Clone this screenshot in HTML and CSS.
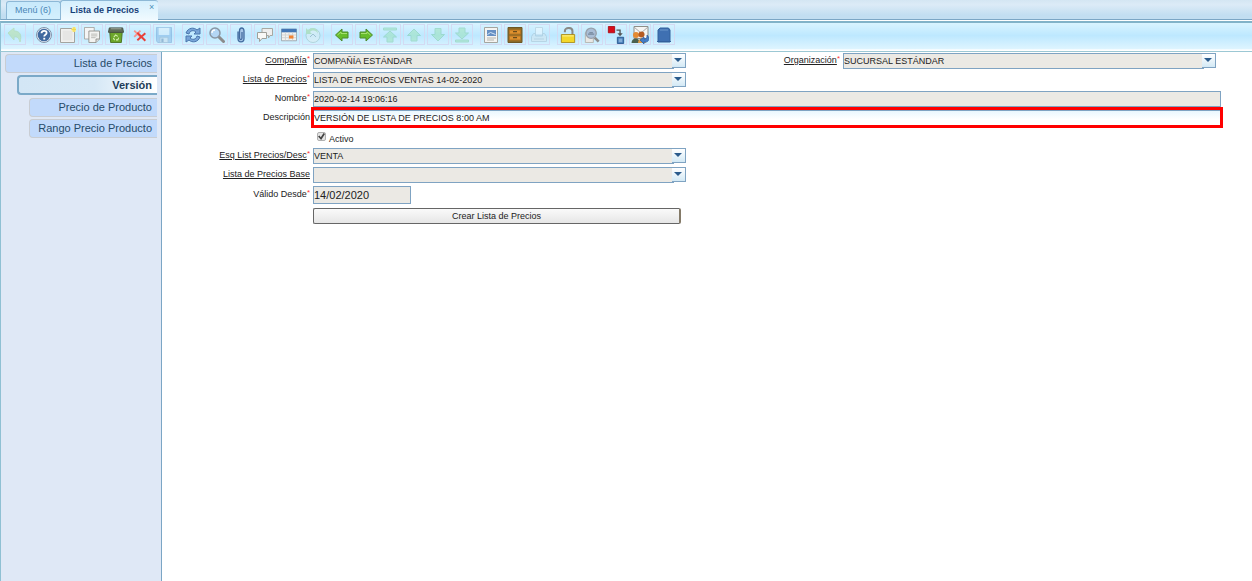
FILE: index.html
```html
<!DOCTYPE html>
<html lang="es">
<head>
    <meta charset="UTF-8">
    <meta name="viewport" content="width=device-width, initial-scale=1.0">
    <title>Lista de Precios</title>
    <link rel="stylesheet" href="styles.css">
</head>
<body>

<nav class="tabs">
    <a class="tab" href="#menu">Menú (6)</a>
    <div class="tab active">
        <a href="#lista">Lista de Precios</a>
        <button class="tab-close" aria-label="Cerrar">×</button>
    </div>
</nav>

<div class="toolbar">
    <div class="tool-group">
        <button disabled aria-label="Deshacer">
            <svg viewBox="0 0 16 16"><path d="M1 6l6-5v3c6 0 8 4 6 11-1-4-3-6-6-5v3z" fill="#b4dc80" stroke="#9fce72"/></svg>
        </button>
    </div>
    <div class="tool-group">
        <button aria-label="Ayuda">
            <svg viewBox="0 0 16 16"><circle cx="8" cy="8" r="7.5" fill="#e8eef6" stroke="#8294ab"/><circle cx="8" cy="8" r="6.300" fill="#41699f"/><path d="M5.500 6.300C5.500 3 10.800 3 10.600 6c0 1.800-2.400 1.800-2.400 3.500" fill="none" stroke="#fff" stroke-width="1.800"/><path d="M7.300 10.800h1.900v1.800H7.300z" fill="#fff"/></svg>
        </button>
        <button aria-label="Nuevo">
            <svg viewBox="0 0 16 16"><path d="M.5 1.500h14v14H.5z" fill="#f1f1ef" stroke="#a4a4a0"/><path d="M2.500 3.500h10v10h-10z" fill="#e6e6e4"/><circle cx="14" cy="2.500" r="2.500" fill="#f8ea92"/><path d="M14 0v5M11.500 2.500h5" stroke="#f1d94a"/></svg>
        </button>
        <button aria-label="Copiar">
            <svg viewBox="0 0 18 18"><path d="M.5.5h11v13H.5z" fill="#f5f5f5" stroke="#a4a4a0"/><path d="M5.500 4.500h12v9l-4 4h-8z" fill="#f3f3f1" stroke="#8f8f8a"/><path d="M8 8h7M8 10h7M8 12h5" stroke="#b5b5b0"/><path d="M13.500 17.500v-4h4" fill="#ddd" stroke="#8f8f8a"/></svg>
        </button>
        <button aria-label="Eliminar">
            <svg viewBox="0 0 18 18"><path d="M2 6h14l-1 11.500H3z" fill="#6da62b" stroke="#466e1b"/><path d="M1.500 1h15l1 5H.5z" fill="#5f6c58" stroke="#434c40"/><path d="M3 2h12" stroke="#a7afa6"/><path d="M6.500 11.500L8.500 9l2.500 1.500M12 12l-1 2.500H9M6 12.500l1.500 2.300" fill="none" stroke="#d6f2b0" stroke-width="1.200"/></svg>
        </button>
        <button aria-label="Eliminar selección">
            <svg viewBox="0 0 18 18"><path d="M2.500 4l7 7M9.500 4l-7 7" stroke="#f5938d" stroke-width="2"/><path d="M6 6.500l9 9M15 7l-9 8" stroke="#e8403a" stroke-width="2.200"/></svg>
        </button>
        <button disabled aria-label="Guardar">
            <svg viewBox="0 0 18 18"><path d="M.5.5h17v17H2l-1.500-2z" fill="#73a7dc" stroke="#4480bd"/><path d="M3 1h12v8H3z" fill="#e6f0f8"/><path d="M4.500 11.500h9v6h-9z" fill="#ccd9e4" stroke="#7191b2"/><path d="M6 13h2.500v4H6z" fill="#446f9e"/></svg>
        </button>
    </div>
    <div class="tool-group">
        <button aria-label="Refrescar">
            <svg viewBox="0 0 16 16"><path d="M1 6C3 .5 9 0 12 3l3-2v6H9l2-2C9 3 5 3 4 7z" fill="#78a5d8" stroke="#4a76ad"/><path d="M15 10c-2 5.500-8 6-11 3l-3 2V9h6l-2 2c2 2 6 2 7-2z" fill="#78a5d8" stroke="#4a76ad"/></svg>
        </button>
        <button aria-label="Buscar">
            <svg viewBox="0 0 16 16"><path d="M10 10l4.500 4.500" stroke="#8c8c8c" stroke-width="3" stroke-linecap="round"/><circle cx="6" cy="6" r="5" fill="#b4d6f4" stroke="#8a96a3" stroke-width="1.500"/><path d="M3 6c0-2 1-3 3-3" fill="none" stroke="#fff" stroke-width="1.300"/></svg>
        </button>
        <button aria-label="Adjuntos">
            <svg viewBox="0 0 16 16"><path d="M5 4.500v7c0 4.500 6 4.500 6 0V4c0-4-4.500-4-4.500 0v7c0 2 2.500 2 2.500 0V5" fill="#a9c8e8" stroke="#426b9f" stroke-width="1.300"/></svg>
        </button>
        <button aria-label="Chat">
            <svg viewBox="0 0 16 16"><path d="M5 1.500h10.500v7H13L11.500 11V8.500H5z" fill="#eee" stroke="#a8a8a2"/><path d="M.5 5.500h9v6H5L2.500 14.500v-3h-2z" fill="#f8f8f6" stroke="#a0a09a"/></svg>
        </button>
        <button aria-label="Vista de tabla">
            <svg viewBox="0 0 18 16"><path d="M.5 1.500h17v13H.5z" fill="#f3f3f0" stroke="#9aa3ac"/><path d="M.5 1h17v4H.5z" fill="#4276b5"/><path d="M1 8h16M1 11h16M5 5v9M9 5v9M13 5v9" stroke="#cfd1d1"/><path d="M9 8.500h5v3.500H9z" fill="#f08333"/></svg>
        </button>
        <button disabled aria-label="Historial">
            <svg viewBox="0 0 16 16"><circle cx="8" cy="8.500" r="7" fill="#e7f0ed" stroke="#87afa8"/><path d="M1 1v6h6L5 5c3-3 7-1 8 2C13 1 7-1 3 3z" fill="#8bcf78"/><path d="M5 10l3-3 3 3" fill="none" stroke="#6e8b90"/></svg>
        </button>
    </div>
    <div class="tool-group">
        <button aria-label="Registro padre">
            <svg viewBox="0 0 16 16"><path d="M1.500 8L8 2v3h6v6H8v3z" fill="#66bd2b" stroke="#4d8a2c"/><path d="M3.500 8L7 5v1.500h6" fill="none" stroke="#a6df70"/></svg>
        </button>
        <button aria-label="Registro detalle">
            <svg viewBox="0 0 16 16"><path d="M14.500 8L8 2v3H2v6h6v3z" fill="#66bd2b" stroke="#4d8a2c"/><path d="M3 6.500h6V5l3.500 3" fill="none" stroke="#a6df70"/></svg>
        </button>
        <button disabled aria-label="Primer registro">
            <svg viewBox="0 0 16 16"><path d="M1.500 1h13v2h-13zM8 4l6.500 6H11v5H5v-5H1.500z" fill="#8de0a3" stroke="#65c28c"/></svg>
        </button>
        <button disabled aria-label="Registro anterior">
            <svg viewBox="0 0 16 16"><path d="M8 2l6.500 6.500H11V14H5V8.500H1.500z" fill="#8de0a3" stroke="#65c28c"/></svg>
        </button>
        <button disabled aria-label="Registro siguiente">
            <svg viewBox="0 0 16 16"><path d="M8 14l6.500-6.500H11V1.500H5v6H1.500z" fill="#8de0a3" stroke="#65c28c"/></svg>
        </button>
        <button disabled aria-label="Último registro">
            <svg viewBox="0 0 16 16"><path d="M1.500 13h13v2h-13zM8 12l6.500-6H11V1H5v5H1.500z" fill="#8de0a3" stroke="#65c28c"/></svg>
        </button>
    </div>
    <div class="tool-group">
        <button aria-label="Informe">
            <svg viewBox="0 0 16 16"><path d="M1.500.5h13v15h-13z" fill="#f4f4f2" stroke="#a5a59f"/><path d="M4 3h9v6H4z" fill="#6690c4"/><path d="M4.500 7.500l3-2 5 2" fill="none" stroke="#d5e6f6"/><path d="M4 11h9M4 13h7" stroke="#b4b4ae"/></svg>
        </button>
        <button aria-label="Archivo">
            <svg viewBox="0 0 16 16"><path d="M1 .5h14v15H1z" fill="#8a6a28" stroke="#6e5626"/><path d="M2.500 3h11v4h-11zM2.500 9h11v4h-11z" fill="#e0922f" stroke="#b87420"/><path d="M6 4.700h4M6 10.700h4" stroke="#6b4c1a" stroke-width="1.300"/></svg>
        </button>
        <button disabled aria-label="Imprimir">
            <svg viewBox="0 0 16 16"><path d="M4.500.5h7V8h-7z" fill="#fff" stroke="#a9bcc8"/><path d="M2.500 6.500h2V9h7V6.500h2l2 3v5H.5v-5z" fill="#d9e3e8" stroke="#9ab2c0"/><path d="M3 12h10" stroke="#9aaeb9"/></svg>
        </button>
    </div>
    <div class="tool-group">
        <button aria-label="Desbloquear">
            <svg viewBox="0 0 18 18"><path d="M5.500 6V4.500c0-4.500 8.500-4.500 8.500 0V9" fill="none" stroke="#8a8a86" stroke-width="2.300"/><path d="M1.500 8.500h15v9h-15z" fill="#f3d82c" stroke="#a98a17"/><path d="M2.500 10h13" stroke="#fff6a1"/></svg>
        </button>
        <button aria-label="Acercar">
            <svg viewBox="0 0 18 18"><path d="M1.500 6.500h9v11h-9z" fill="#e8e8e6" stroke="#b2b2ad"/><path d="M12 12l4.500 4.500" stroke="#8c8c8c" stroke-width="3"/><circle cx="8" cy="7" r="5.800" fill="#a9bed6" stroke="#98a0aa" stroke-width="1.500"/><path d="M4.500 8h7M6 6.500h4" stroke="#63758a"/></svg>
        </button>
        <button aria-label="Flujo de trabajo">
            <svg class="wide" viewBox="0 0 18 20"><path d="M.5.5h7v7h-7z" fill="#d80d19" stroke="#a80c16"/><path d="M9.500 4.500h4v5" fill="none" stroke="#555" stroke-width="1.500"/><path d="M10.500 8h6l-3 3.500z" fill="#555"/><path d="M10.500 12.500h7v7h-7z" fill="#477cb9" stroke="#27578e"/><path d="M12 14h4v4h-4z" fill="#83add8"/></svg>
        </button>
        <button aria-label="Solicitudes">
            <svg class="wide" viewBox="0 0 18 18"><path d="M3 .5h14v12H3z" fill="#f5f5f2" stroke="#8e8e88"/><path d="M3 1l7 6 7-6" fill="none" stroke="#aaa"/><circle cx="5" cy="9" r="3" fill="#e38b32"/><circle cx="10.500" cy="8.500" r="3" fill="#b55c22"/><path d="M.5 17c0-6 8-6 9 0z" fill="#4b614e"/><path d="M7 17c0-6 7-6 8 0z" fill="#df9c48"/><path d="M9 14l4-3v2c3 0 3-2 3-4 4 4 1 8-3 7v2z" fill="#447ec5" stroke="#285aa0" stroke-width=".7"/></svg>
        </button>
        <button aria-label="Producto">
            <svg viewBox="0 0 16 16"><path d="M4 1h8.500L14 3v12H2V3z" fill="#3f70b2" stroke="#33609c"/><path d="M4 3h8" stroke="#6d98cc"/><path d="M1 14.500h14" stroke="#33609c"/></svg>
        </button>
    </div>
</div>

<div class="window">
    <nav class="sidebar">
        <a class="level-0" href="#lista">Lista de Precios</a>
        <a class="level-1 selected" href="#version">Versión</a>
        <a class="level-2" href="#precio">Precio de Producto</a>
        <a class="level-2" href="#rango">Rango Precio Producto</a>
    </nav>

    <form class="version-form">
        <label class="link required" for="compania">Compañía</label>
        <div class="combo">
            <select id="compania"><option>COMPAÑÍA ESTÁNDAR</option></select>
            <span class="combo-arrow"></span>
        </div>
        <label class="link required second" for="organizacion">Organización</label>
        <div class="combo">
            <select id="organizacion"><option>SUCURSAL ESTÁNDAR</option></select>
            <span class="combo-arrow"></span>
        </div>

        <label class="link required" for="lista-precios">Lista de Precios</label>
        <div class="combo">
            <select id="lista-precios"><option>LISTA DE PRECIOS VENTAS 14-02-2020</option></select>
            <span class="combo-arrow"></span>
        </div>

        <label class="required" for="nombre">Nombre</label>
        <div class="full">
            <input type="text" id="nombre" value="2020-02-14 19:06:16" readonly>
        </div>

        <label for="descripcion">Descripción</label>
        <div class="full highlight">
            <input type="text" id="descripcion" value="VERSIÓN DE LISTA DE PRECIOS 8:00 AM">
        </div>

        <div class="check">
            <input type="checkbox" id="activo" checked>
            <label for="activo">Activo</label>
        </div>

        <label class="link required" for="esquema">Esq List Precios/Desc</label>
        <div class="combo">
            <select id="esquema"><option>VENTA</option></select>
            <span class="combo-arrow"></span>
        </div>

        <label class="link" for="lista-base">Lista de Precios Base</label>
        <div class="combo">
            <select id="lista-base"><option></option></select>
            <span class="combo-arrow"></span>
        </div>

        <label class="required date-label" for="valido">Válido Desde</label>
        <input type="text" class="date" id="valido" value="14/02/2020" readonly>

        <button type="button" class="create">Crear Lista de Precios</button>
    </form>
</div>

</body>
</html>
```
FILE: styles.css
```css
* {
    box-sizing: border-box;
}
body {
    display: flex;
    flex-direction: column;
    min-height: 100vh;
    margin: 0;
    background: #fff;
    color: #222;
    font-family: "Liberation Sans", Arial, sans-serif;
    font-size: 9px;
}
a {
    color: inherit;
    text-decoration: none;
}
button,
input,
select {
    margin: 0;
    font-family: inherit;
    font-size: 9px;
    color: #222;
}

/* window tabs */
.tabs {
    display: flex;
    align-items: flex-end;
    height: 20px;
    padding-left: 6px;
    border-left: 1px solid #8fc0d3;
    border-bottom: 1px solid #7ba6c5;
    background: linear-gradient(#d4e6f3, #dcebf7 25%, #c2def1 80%);
}
.tabs .tab {
    margin-left: -1px;
}
.tab {
    height: 18px;
    padding: 0 9px 0 8px;
    border: 1px solid #8db8d6;
    border-bottom: 0;
    border-radius: 3px 3px 0 0;
    background: linear-gradient(#c8e9fb, #d3f0fe);
    color: #4a87b8;
    line-height: 17px;
}
.tab.active {
    display: flex;
    height: 20px;
    margin-bottom: -1px;
    padding: 0 4px 0 9px;
    border-right: 0;
    background: linear-gradient(#d5effd, #f0faff);
    color: #163f78;
    font-weight: bold;
    line-height: 19px;
}
.tab-close {
    align-self: flex-start;
    margin-left: 10px;
    padding: 0;
    border: 0;
    background: none;
    color: #4a90b8;
    line-height: 13px;
}

/* toolbar */
.toolbar {
    display: flex;
    gap: 7px;
    height: 31px;
    margin-top: 1px;
    padding: 1px 3px;
    border-top: 2px solid #82b3c8;
    border-left: 1px solid #8fc0d3;
    border-bottom: 1px solid #9cc8d4;
    background: linear-gradient(#d9f4ff, #bde8ff 45%, #dff5ff 94%, #fff 95%);
}
.tool-group {
    display: flex;
    gap: 2px;
}
.toolbar button {
    display: flex;
    align-items: center;
    justify-content: center;
    width: 22px;
    height: 21px;
    padding: 0;
    border: 1px solid #d3daf2;
    background: none;
}
.toolbar svg {
    flex: none;
    width: 16px;
    height: 16px;
}
.toolbar svg.wide {
    width: 18px;
    height: 18px;
}
.toolbar button:disabled svg {
    opacity: 0.4;
}

.window {
    display: flex;
    flex: 1;
}

/* tab list on the left */
.sidebar {
    display: flex;
    flex-direction: column;
    gap: 2px;
    width: 162px;
    padding: 2px 4px 0;
    border-left: 1px solid #8fc0d3;
    border-right: 1px solid #7ba6c5;
    background: #dfe8f6;
}
.sidebar a {
    height: 19px;
    padding-right: 5px;
    border: 1px solid #c9cdd3;
    border-right: 0;
    border-radius: 4px 0 0 4px;
    background: #c2dafb;
    color: #274b68;
    font-size: 11px;
    line-height: 17px;
    text-align: right;
}
.sidebar .level-1 {
    margin-left: 12px;
}
.sidebar .level-2 {
    margin-left: 24px;
}
.sidebar .selected {
    height: 20px;
    margin-bottom: 1px;
    border: 2px solid #7ba9c8;
    border-right: 0;
    background: linear-gradient(90deg, #d3e6f5, #d6e8f6 55%, #fff);
    color: #1d3c58;
    font-weight: bold;
}

/* record form */
.version-form {
    display: grid;
    flex: 1;
    grid-template-columns: 148px minmax(0, 1fr) 151px minmax(0, 1fr);
    grid-auto-rows: minmax(19px, auto);
    column-gap: 3px;
    align-content: start;
    align-items: start;
    padding: 1px 36px 0 0;
}
.version-form > label {
    grid-column: 1;
    justify-self: end;
    padding-top: 2px;
    line-height: 11px;
}
.version-form > .second {
    grid-column: 3;
}
.link {
    text-decoration: underline;
    text-underline-offset: 1px;
}
.required::after {
    content: "*";
    display: inline-block;
    color: #f33;
    font-size: 8px;
    line-height: 8px;
    vertical-align: top;
}
.version-form input[type="text"],
.combo select {
    height: 16px;
    padding: 0;
    border: 1px solid #7fa3c2;
    border-radius: 0;
    background: #ebe9e4;
}
.combo {
    display: flex;
    align-items: flex-start;
}
.combo select {
    flex: 1;
    min-width: 0;
    appearance: none;
}
.combo-arrow {
    display: flex;
    justify-content: center;
    width: 14px;
    height: 15px;
    margin-left: -2px;
    padding-top: 4px;
    border: 1px solid #7fa3c2;
    border-left: 0;
    background: linear-gradient(#fff, #d3e9f5);
    z-index: 1;
    pointer-events: none;
}
.combo-arrow::after {
    content: "";
    width: 8px;
    height: 4px;
    margin-right: 1px;
    background: #2a5b8c;
    clip-path: polygon(0 0, 100% 0, 50% 100%);
}
.full {
    grid-column: 2 / -1;
    display: flex;
    margin-right: -5px;
}
.full input {
    flex: 1;
}
.highlight {
    position: relative;
}
.version-form .highlight input {
    background: linear-gradient(#eaf7fe, #fff 60%);
}
.highlight::after {
    content: "";
    position: absolute;
    inset: -3px -2px -2px;
    border: 3px solid #f00;
    pointer-events: none;
}
.check {
    grid-column: 2;
    display: flex;
    gap: 3px;
    padding: 3px 0 0 4px;
}
.check input {
    appearance: none;
    width: 9px;
    height: 9px;
    border: 1px solid #b0b0b0;
    border-radius: 2px;
    background: #e4e4e4;
}
.check input:checked::after {
    content: "";
    display: block;
    width: 7px;
    height: 7px;
    background: #444;
    clip-path: polygon(0 50%, 20% 35%, 40% 60%, 80% 0, 100% 15%, 45% 100%);
}
.check label {
    padding-top: 2px;
    line-height: 11px;
}
.version-form .date-label {
    padding-top: 3px;
}
.version-form input.date {
    width: 98px;
    height: 18px;
    font-size: 11px;
}
.create {
    grid-column: 2;
    height: 16px;
    margin: 3px 5px 0 0;
    padding: 0;
    border: 1px solid #666;
    border-right: 2px solid #847a68;
    border-radius: 2px;
    background: linear-gradient(#fafafa, #e6e6e6);
    line-height: 14px;
}
```
